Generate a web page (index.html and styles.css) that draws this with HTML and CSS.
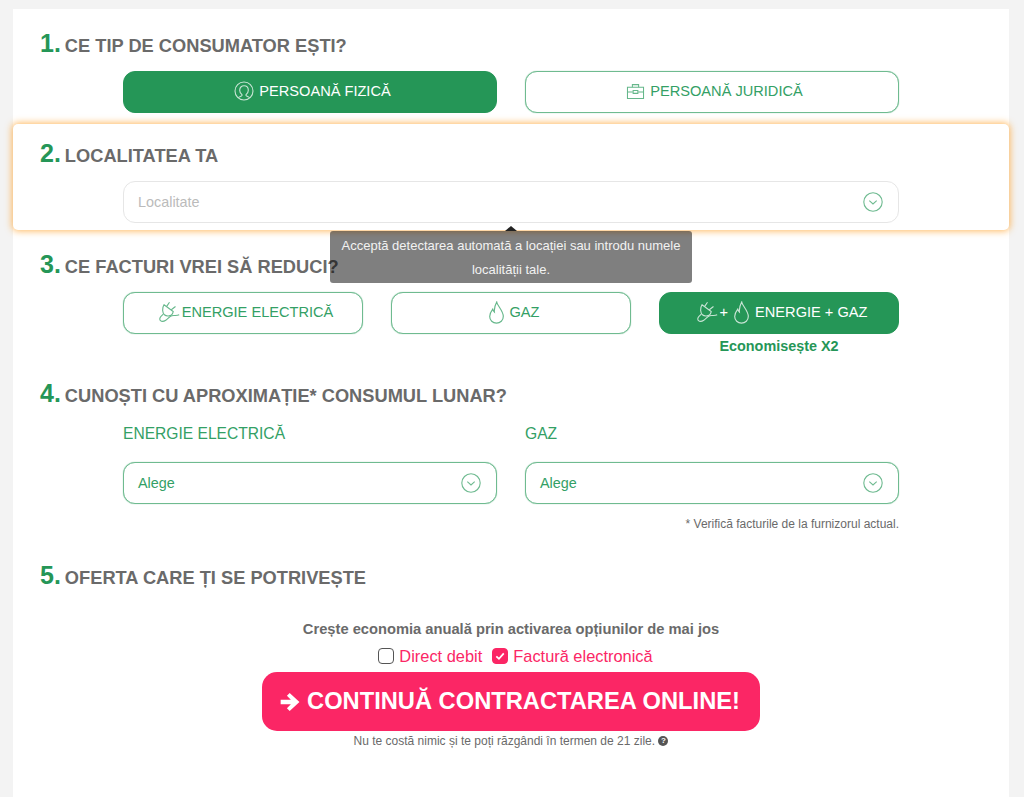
FILE: index.html
```html
<!DOCTYPE html>
<html lang="ro">
<head>
    <meta charset="UTF-8">
    <meta name="viewport" content="width=device-width, initial-scale=1.0">
    <title>Ofertă energie și gaz</title>
    <link rel="stylesheet" href="styles.css">
</head>
<body>
    <svg class="icon-defs" width="0" height="0">
        <symbol id="i-person" viewBox="0 0 20 20">
            <circle cx="10" cy="10" r="9"/>
            <path d="M4.300 16.600c1-1.100 2.900-1.200 3.500-1.900.4-.5.3-1.100-.2-1.500-1.100-1-1.900-2.300-1.900-4C5.700 6.500 7.500 4.800 10 4.800s4.300 1.700 4.300 4.400c0 1.700-.8 3-1.900 4-.5.4-.6 1-.2 1.500.6.7 2.500.8 3.500 1.900"/>
        </symbol>
        <symbol id="i-case" viewBox="0 0 20 18">
            <path d="M1.500 4.500h17v12h-17z"/>
            <path d="M6.700 4.500V1.700h6.600v2.800M1.500 9.500h5.700M12.800 9.500h5.700"/>
            <path d="M7.500 8h5v3h-5z"/>
        </symbol>
        <symbol id="i-plug" viewBox="0 0 22 22">
            <path d="M11.500 1.200 8.500 5.600M17.500 5.500l-4.200 3.200"/>
            <path d="M6 3.800 15.200 10.600c-.4 2.500-2.400 4-4.400 4.300-1.800.2-3.300-.2-4.400-1.100C4.400 11.800 3.800 7.200 6 3.800z"/>
            <path d="M5.300 13.200 3 15.300c-1.400 1.400-1.600 3.300-.5 4.300 1.300 1.200 3.600.7 5.300-.4 2.400-1.600 3.700-3.900 6-4.500 2.400-.6 4.800.5 7.400-.9"/>
        </symbol>
        <symbol id="i-flame" viewBox="0 0 16 22">
            <path d="M8.200 1c.6 3.600 6.300 8.300 6.300 13.800 0 3.700-2.900 6.400-6.500 6.400s-6.500-2.700-6.500-6.400c0-2.900 1.500-5.100 2.900-7 .3 1.300.8 2.100 1.600 2.800C5.600 7.300 6.600 4 8.200 1z"/>
        </symbol>
        <symbol id="i-chevron" viewBox="0 0 20 20">
            <circle cx="10" cy="10" r="9.200"/>
            <path d="M6.300 8.700 10 12l3.700-3.300"/>
        </symbol>
    </svg>

    <main class="form-card">
        <section class="step step-first">
            <h2 class="step-title"><span class="step-num">1.</span> CE TIP DE CONSUMATOR EȘTI?</h2>
            <div class="choice-row two">
                <button class="choice active"><svg class="icon icon-person"><use href="#i-person"/></svg> PERSOANĂ FIZICĂ</button>
                <button class="choice"><svg class="icon icon-case"><use href="#i-case"/></svg> PERSOANĂ JURIDICĂ</button>
            </div>
        </section>

        <section class="step step-focus">
            <h2 class="step-title"><span class="step-num">2.</span> LOCALITATEA TA</h2>
            <div class="field-row">
                <div class="select select-muted">
                    <span>Localitate</span>
                    <svg class="icon icon-chevron"><use href="#i-chevron"/></svg>
                </div>
            </div>
            <div class="tooltip">Acceptă detectarea automată a locației sau introdu numele localității tale.</div>
        </section>

        <section class="step step-bills">
            <h2 class="step-title"><span class="step-num">3.</span> CE FACTURI VREI SĂ REDUCI?</h2>
            <div class="choice-row three">
                <button class="choice"><svg class="icon icon-plug"><use href="#i-plug"/></svg> ENERGIE ELECTRICĂ</button>
                <button class="choice"><svg class="icon icon-flame"><use href="#i-flame"/></svg> GAZ</button>
                <button class="choice active"><svg class="icon icon-plug"><use href="#i-plug"/></svg> + <svg class="icon icon-flame"><use href="#i-flame"/></svg> ENERGIE + GAZ</button>
            </div>
            <div class="choice-row three save-row">
                <span></span>
                <span></span>
                <span class="save-note">Economisește X2</span>
            </div>
        </section>

        <section class="step step-usage">
            <h2 class="step-title"><span class="step-num">4.</span> CUNOȘTI CU APROXIMAȚIE* CONSUMUL LUNAR?</h2>
            <div class="choice-row two">
                <div>
                    <div class="field-label">ENERGIE ELECTRICĂ</div>
                    <div class="select">
                        <span>Alege</span>
                        <svg class="icon icon-chevron"><use href="#i-chevron"/></svg>
                    </div>
                </div>
                <div>
                    <div class="field-label">GAZ</div>
                    <div class="select">
                        <span>Alege</span>
                        <svg class="icon icon-chevron"><use href="#i-chevron"/></svg>
                    </div>
                </div>
            </div>
            <p class="footnote">* Verifică facturile de la furnizorul actual.</p>
        </section>

        <section class="step step-offer">
            <h2 class="step-title"><span class="step-num">5.</span> OFERTA CARE ȚI SE POTRIVEȘTE</h2>
            <p class="offer-lead">Crește economia anuală prin activarea opțiunilor de mai jos</p>
            <div class="offer-options">
                <label class="check"><span class="box"></span> Direct debit</label>
                <label class="check"><span class="box checked"><svg viewBox="0 0 16 16"><path d="M3.800 8.300 6.800 11.200 12.300 5"/></svg></span> Factură electronică</label>
            </div>
            <button class="cta"><svg class="cta-arrow" viewBox="0 0 20 20"><path d="M1.500 8h9.300L7.200 4.400 9.700 1.900 18.600 10l-8.900 8.100-2.500-2.500 3.600-3.600H1.500z"/></svg> CONTINUĂ CONTRACTAREA ONLINE!</button>
            <p class="cta-note">Nu te costă nimic și te poți răzgândi în termen de 21 zile. <span class="help">?</span></p>
        </section>
    </main>
</body>
</html>
```

FILE: styles.css
```css
* {
    margin: 0;
    padding: 0;
    box-sizing: border-box;
}

body {
    font-family: "Liberation Sans", Arial, sans-serif;
    background: #f3f3f3;
    color: #6a6a6a;
    height: 797px;
    overflow: hidden;
    padding: 9px 15px 0 13px;
}

.icon-defs {
    display: block;
}

.form-card {
    background: #fff;
    height: 788px;
}

.step {
    position: relative;
    padding: 19px 110px 0 27px;
}

.step-first {
    padding-bottom: 11px;
}

.step-focus {
    background: #fff;
    border-radius: 5px;
    box-shadow: 0 0 7px 1px rgba(255, 160, 40, 0.75);
    padding-top: 14px;
    padding-bottom: 7px;
}

.step-usage {
    padding-top: 23px;
}

.step-offer {
    padding-top: 28px;
}

.step-title {
    display: flex;
    align-items: baseline;
    gap: 4px;
    height: 34px;
    margin-bottom: 9px;
    font-size: 18.25px;
    font-weight: bold;
    line-height: 30px;
    color: #6a6a6a;
}

.step-num {
    font-size: 25px;
    color: #259657;
}

.choice-row {
    display: grid;
    margin-left: 83px;
}

.choice-row.two {
    grid-template-columns: 1fr 1fr;
    column-gap: 28px;
}

.choice-row.three {
    grid-template-columns: 1fr 1fr 1fr;
    column-gap: 28px;
}

.choice {
    display: flex;
    align-items: center;
    justify-content: center;
    gap: 5px;
    height: 42px;
    padding: 0 0 2px 5px;
    border: 1px solid #6fbb90;
    border-radius: 12px;
    box-shadow: 0 0 1px #6fbb90;
    background: #fff;
    color: #33a065;
    font-family: inherit;
    font-size: 14.6px;
}

.choice.active {
    background: #259657;
    border-color: #259657;
    box-shadow: none;
    color: #fff;
}

.icon {
    fill: none;
    stroke: currentColor;
    stroke-width: 1.1;
    opacity: 0.75;
    flex: none;
}

.icon-person {
    width: 20px;
    height: 20px;
}

.icon-case {
    width: 19px;
    height: 17px;
}

.icon-plug {
    width: 22px;
    height: 22px;
    margin-right: -3px;
}

.icon-flame {
    width: 17px;
    height: 23px;
}

.icon-chevron {
    width: 20px;
    height: 20px;
    color: #3fa46c;
}

.field-row {
    margin-left: 83px;
}

.select {
    display: flex;
    align-items: center;
    justify-content: space-between;
    height: 42px;
    padding: 0 15px 0 14px;
    border: 1px solid #6fbb90;
    border-radius: 12px;
    box-shadow: 0 0 1px #6fbb90;
    background: #fff;
    color: #33a065;
    font-size: 14.4px;
}

.select-muted {
    border-color: #e6e6e6;
    box-shadow: none;
    color: #bbb;
}

.tooltip {
    position: absolute;
    left: 317px;
    top: 107px;
    width: 362px;
    height: 52px;
    padding: 3px 8px 0;
    background: rgba(0, 0, 0, 0.5);
    border-radius: 3px;
    color: #f2f2f2;
    font-size: 13px;
    line-height: 24px;
    text-align: center;
    z-index: 2;
}

.tooltip::before {
    content: "";
    position: absolute;
    left: 175px;
    top: -5px;
    border-left: 6px solid transparent;
    border-right: 6px solid transparent;
    border-bottom: 5px solid #222;
}

.save-row {
    margin-top: 3px;
}

.save-note {
    height: 18px;
    line-height: 18px;
    text-align: center;
    font-size: 14.4px;
    font-weight: bold;
    color: #259657;
}

.field-label {
    height: 20px;
    line-height: 20px;
    margin: 3px 0 18px;
    color: #33a065;
    font-size: 15.6px;
}

.footnote {
    margin-top: 12px;
    height: 16px;
    line-height: 16px;
    text-align: right;
    font-size: 12px;
    color: #6a6a6a;
}

.offer-lead {
    margin-top: 25px;
    margin-left: 83px;
    text-align: center;
    font-size: 14.7px;
    font-weight: bold;
    line-height: 20px;
}

.offer-options {
    display: flex;
    justify-content: center;
    gap: 10px;
    margin-left: 92px;
    margin-top: 7px;
    height: 20px;
}

.check {
    display: flex;
    align-items: center;
    gap: 5px;
    color: #fb2665;
    font-size: 16.4px;
}

.box {
    width: 16px;
    height: 16px;
    border: 1px solid #555;
    border-radius: 4px;
    background: #fff;
}

.box.checked {
    background: #fb2665;
    border-color: #fb2665;
}

.box svg {
    display: block;
    width: 14px;
    height: 14px;
    fill: none;
    stroke: #fff;
    stroke-width: 2;
}

.cta {
    display: flex;
    align-items: center;
    justify-content: center;
    gap: 6px;
    width: 498px;
    height: 59px;
    margin: 6px 0 0 222px;
    border: none;
    border-radius: 15px;
    background: #fb2665;
    color: #fff;
    font-family: inherit;
    font-size: 23.7px;
    font-weight: bold;
}

.cta-arrow {
    width: 22px;
    height: 22px;
    margin-left: -3px;
    fill: #fff;
}

.cta-note {
    margin-left: 83px;
    margin-top: 2px;
    text-align: center;
    font-size: 12px;
    line-height: 16px;
}

.help {
    display: inline-block;
    width: 10px;
    height: 10px;
    border-radius: 50%;
    background: #555;
    color: #fff;
    font-size: 8px;
    font-weight: bold;
    line-height: 10px;
    text-align: center;
    vertical-align: 2px;
}
```
